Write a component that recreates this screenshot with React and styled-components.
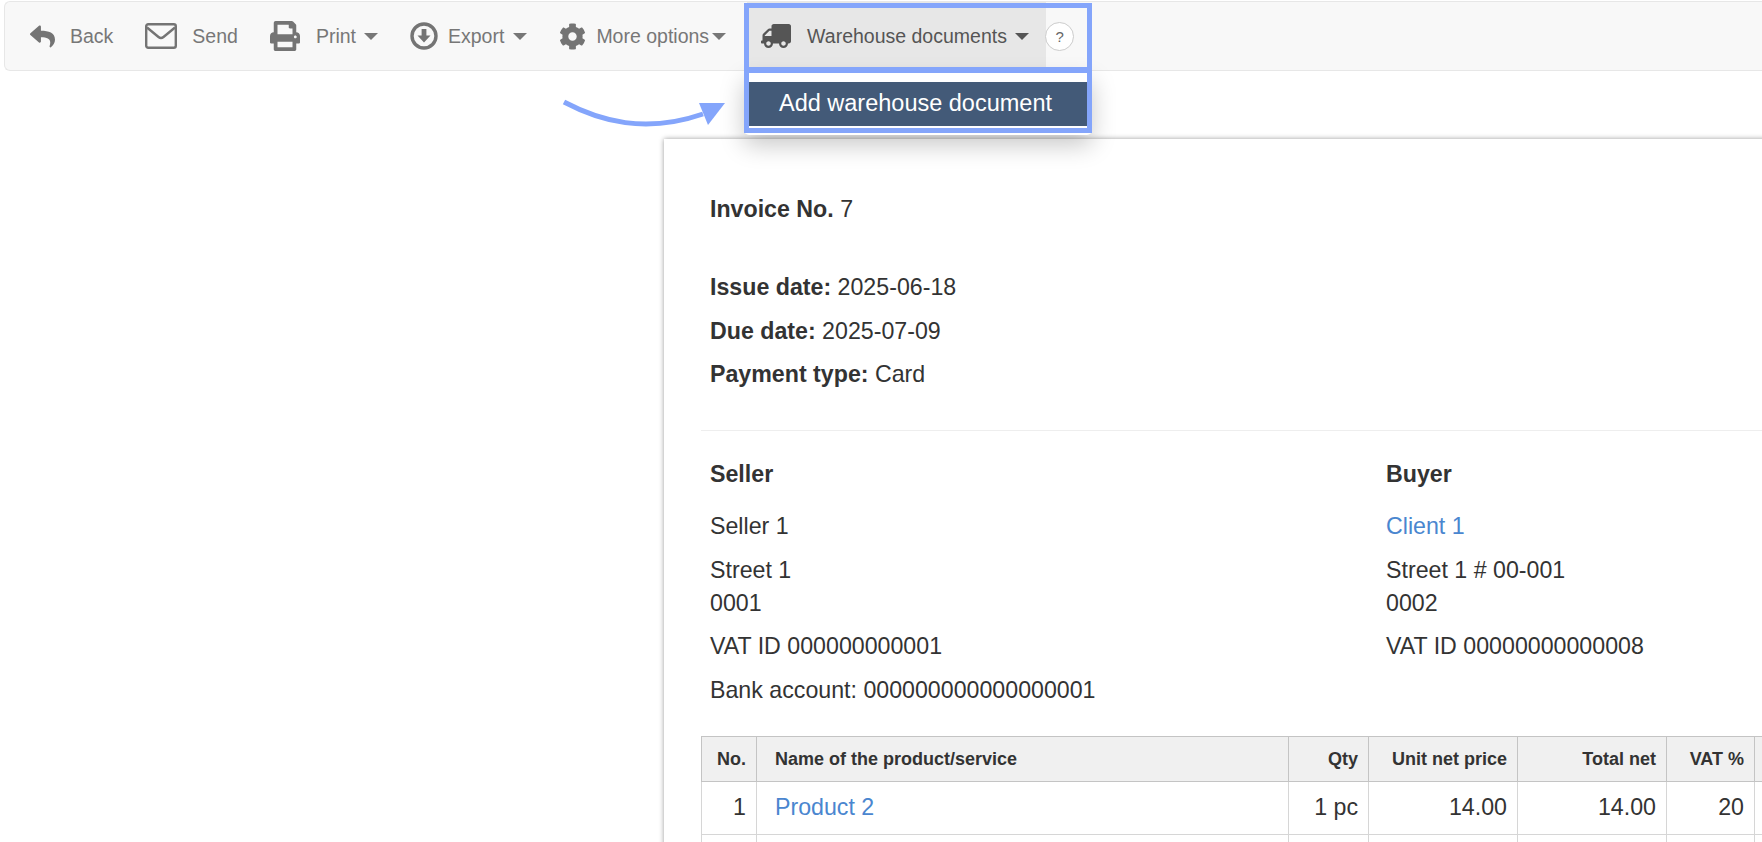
import React from 'react'
import styled, { createGlobalStyle } from 'styled-components'
import { FaReply, FaPrint, FaCog, FaTruck } from 'react-icons/fa'

const GlobalStyle = createGlobalStyle`
  html, body {
    margin: 0;
    height: 100%;
    overflow: hidden;
    background: #fff;
  }
  body {
    font-family: "Liberation Sans", Arial, sans-serif;
    color: #333;
  }
`

const Page = styled.div`
  position: relative;
  width: 1762px;
  height: 842px;
  overflow: hidden;
`

const Toolbar = styled.div`
  display: flex;
  align-items: center;
  gap: 32px;
  box-sizing: border-box;
  height: 70px;
  margin: 1px 0 0 4px;
  padding-left: 25px;
  background: #f8f8f8;
  border: 1px solid #e7e7e7;
  border-right: 0;
  border-radius: 6px 0 0 6px;
`

const ToolButton = styled.div`
  display: flex;
  align-items: center;
  gap: ${p => p.$gap || 15}px;
  font-size: 19.5px;
  color: #777;
  white-space: nowrap;
  svg { color: #747474; flex: none; }
`

const Caret = styled.span`
  flex: none;
  width: 0;
  height: 0;
  margin-left: ${p => p.$space - (p.$gap || 15)}px;
  border-left: 7.5px solid transparent;
  border-right: 7.5px solid transparent;
  border-top: 7.5px solid ${p => p.$dark ? '#555' : '#777'};
`

const WarehouseGroup = styled.div`
  display: flex;
  align-items: center;
  margin-left: -11px;
`

const WarehouseButton = styled.div`
  display: flex;
  align-items: center;
  gap: 16px;
  box-sizing: border-box;
  height: 68px;
  width: 299px;
  padding-left: 14px;
  background: #e7e7e7;
  font-size: 19.5px;
  color: #555;
  white-space: nowrap;
`

const Truck = styled(FaTruck)`
  flex: none;
  color: #555;
  transform: scaleX(-1);
`

const HelpBadge = styled.span`
  display: flex;
  align-items: center;
  justify-content: center;
  box-sizing: border-box;
  width: 29px;
  height: 29px;
  margin-left: -1px;
  background: #fff;
  border: 1px solid #ccc;
  border-radius: 50%;
  font-size: 15px;
  color: #666;
`

const Menu = styled.div`
  position: absolute;
  left: 744px;
  top: 71px;
  box-sizing: border-box;
  width: 348px;
  height: 64px;
  padding: 11px 3px 0 4px;
  background: #fff;
  border-radius: 0 0 5px 5px;
  box-shadow: 0 10px 24px rgba(0, 0, 0, 0.22);
  z-index: 2;
`

const MenuItem = styled.div`
  height: 44px;
  line-height: 43px;
  padding-right: 6px;
  text-align: center;
  background: #435a78;
  color: #fff;
  font-size: 23.5px;
`

const Highlight = styled.div`
  position: absolute;
  left: 744px;
  top: ${p => p.$top}px;
  box-sizing: border-box;
  width: 348px;
  height: ${p => p.$height}px;
  border: 5px solid #84a5fb;
  z-index: 3;
`

const ArrowDrawing = styled.svg`
  position: absolute;
  left: 555px;
  top: 90px;
  z-index: 3;
`

const Paper = styled.div`
  box-sizing: border-box;
  width: 1300px;
  margin: 68px 0 0 664px;
  padding: 54px 0 0 37px;
  background: #fff;
  box-shadow: 0 0 5px rgba(0, 0, 0, 0.4);
  font-size: 23.2px;
  line-height: 32.8px;
  color: #333;
`

const Line = styled.p`
  margin: 0 0 ${p => p.$bottom ?? 11}px;
`

const InvoiceHead = styled.div`
  padding-left: 9px;
`

const Rule = styled.hr`
  height: 1px;
  margin: 39px 0 27px;
  border: 0;
  background: #eee;
`

const Parties = styled.div`
  display: grid;
  grid-template-columns: 676px 1fr;
  padding-left: 9px;
`

const PartyTitle = styled.h4`
  margin: 0 0 19px;
  font-size: 23.2px;
  line-height: 32.8px;
  font-weight: bold;
`

const Link = styled.a`
  color: #4a86cf;
`

const Table = styled.table`
  table-layout: fixed;
  width: 1153px;
  margin-top: 29px;
  border-collapse: collapse;
`

const Col = styled.col`
  width: ${p => p.$w}px;
`

const HeadCell = styled.th`
  height: 43px;
  padding: 1px ${p => p.$left ? 0 : 10}px 0 ${p => p.$left ? 18 : 0}px;
  background: #f0f0f0;
  border: 1px solid #c4c4c4;
  font-size: 18px;
  line-height: 24px;
  font-weight: bold;
  text-align: ${p => p.$left ? 'left' : 'right'};
`

const Cell = styled.td`
  height: 50px;
  padding: 0 ${p => p.$left ? 0 : 10}px 2px ${p => p.$left ? 18 : 0}px;
  border: 1px solid #d6d6d6;
  font-size: 23.2px;
  text-align: ${p => p.$left ? 'left' : 'right'};
`

const Envelope = () => (
  <svg width="32" height="26" viewBox="0 0 32 26" fill="none" stroke="#747474" strokeWidth="2.4">
    <rect x="1.2" y="1.2" width="29.6" height="23.6" rx="2" />
    <path d="M2 4.5 L13.5 14 Q16 16 18.5 14 L30 4.5" />
  </svg>
)

const ExportIcon = () => (
  <svg width="28" height="28" viewBox="0 0 28 28">
    <circle cx="14" cy="14" r="12" fill="none" stroke="#747474" strokeWidth="3.4" />
    <path d="M11.6 7h4.8v6.6h4.1L14 20.6l-6.5-7h4.1z" fill="#747474" />
  </svg>
)

const CurvedArrow = () => (
  <ArrowDrawing width="180" height="45" viewBox="0 0 180 45">
    <path d="M9 12 C45 31 90 44 148 24" fill="none" stroke="#84a5fb" strokeWidth="5" />
    <path d="M144 13 L170 13 L153 35 Z" fill="#84a5fb" />
  </ArrowDrawing>
)

const widths = [55, 532, 80, 149, 149, 88, 100]

export default function App() {
  return (
    <Page>
      <GlobalStyle />
      <Toolbar>
        <ToolButton><FaReply size={25} />Back</ToolButton>
        <ToolButton $gap={15}><Envelope />Send</ToolButton>
        <ToolButton $gap={16}><FaPrint size={30} />Print<Caret $space={8} $gap={16} /></ToolButton>
        <ToolButton $gap={10}><ExportIcon />Export<Caret $space={9} $gap={10} /></ToolButton>
        <ToolButton $gap={10}><FaCog size={27} />More options<Caret $space={3} $gap={10} /></ToolButton>
        <WarehouseGroup>
          <WarehouseButton>
            <Truck size={30} />
            Warehouse documents
            <Caret $space={8} $gap={16} $dark />
          </WarehouseButton>
          <HelpBadge>?</HelpBadge>
        </WarehouseGroup>
      </Toolbar>

      <Menu><MenuItem>Add warehouse document</MenuItem></Menu>
      <Highlight $top={3} $height={69} />
      <Highlight $top={68} $height={65} />
      <CurvedArrow />

      <Paper>
        <InvoiceHead>
          <Line $bottom={45}><b>Invoice No.</b> 7</Line>
          <Line><b>Issue date:</b> 2025-06-18</Line>
          <Line><b>Due date:</b> 2025-07-09</Line>
          <Line $bottom={0}><b>Payment type:</b> Card</Line>
        </InvoiceHead>
        <Rule />
        <Parties>
          <div>
            <PartyTitle>Seller</PartyTitle>
            <Line>Seller 1</Line>
            <Line>Street 1<br />0001</Line>
            <Line>VAT ID 000000000001</Line>
            <Line $bottom={0}>Bank account: 000000000000000001</Line>
          </div>
          <div>
            <PartyTitle>Buyer</PartyTitle>
            <Line><Link>Client 1</Link></Line>
            <Line>Street 1 # 00-001<br />0002</Line>
            <Line>VAT ID 00000000000008</Line>
          </div>
        </Parties>
        <Table>
          <colgroup>
            {widths.map((w, i) => <Col key={i} $w={w} />)}
          </colgroup>
          <thead>
            <tr>
              <HeadCell>No.</HeadCell>
              <HeadCell $left>Name of the product/service</HeadCell>
              <HeadCell>Qty</HeadCell>
              <HeadCell>Unit net price</HeadCell>
              <HeadCell>Total net</HeadCell>
              <HeadCell>VAT %</HeadCell>
              <HeadCell />
            </tr>
          </thead>
          <tbody>
            <tr>
              <Cell>1</Cell>
              <Cell $left><Link>Product 2</Link></Cell>
              <Cell>1 pc</Cell>
              <Cell>14.00</Cell>
              <Cell>14.00</Cell>
              <Cell>20</Cell>
              <Cell />
            </tr>
            <tr>
              <Cell />
              <Cell $left />
              <Cell />
              <Cell />
              <Cell />
              <Cell />
              <Cell />
            </tr>
          </tbody>
        </Table>
      </Paper>
    </Page>
  )
}
